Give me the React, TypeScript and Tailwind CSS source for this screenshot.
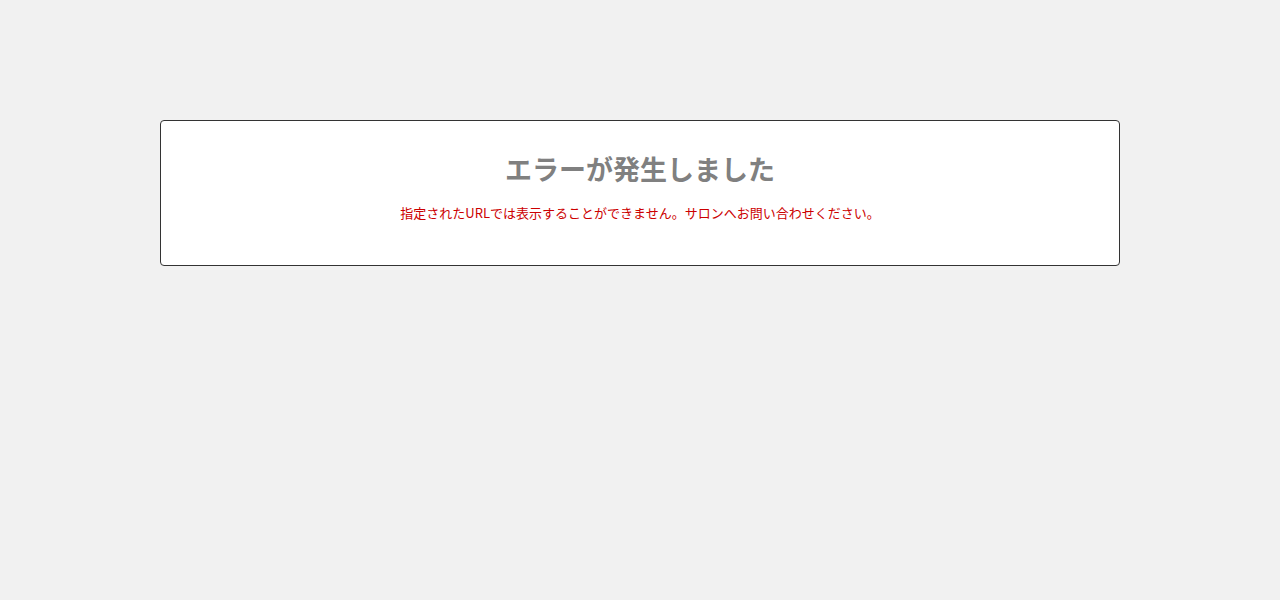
import React from 'react';

export default function App() {
  return (
    <div className="min-h-screen bg-[#f1f1f1] pt-[120px] font-['Noto_Sans_CJK_JP','Liberation_Sans',sans-serif]">
      <div className="mx-auto w-[960px] h-[146px] rounded-[4px] border border-[#333333] bg-white pt-[28px] text-center">
        <h1 className="text-[27px] leading-[40px] font-bold text-[#808080]">エラーが発生しました</h1>
        <p className="mt-[14px] text-[13px] leading-[20px] text-[#cc0000]">
          指定されたURLでは表示することができません。サロンへお問い合わせください。
        </p>
      </div>
    </div>
  );
}
